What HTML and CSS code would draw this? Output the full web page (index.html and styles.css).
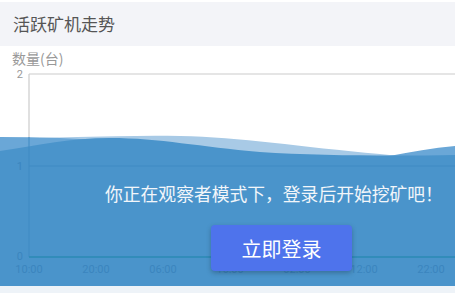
FILE: index.html
```html
<!DOCTYPE html>
<html lang="zh-CN">
<head>
    <meta charset="UTF-8">
    <meta name="viewport" content="width=device-width, initial-scale=1.0">
    <title>活跃矿机走势</title>
    <link rel="stylesheet" href="styles.css">
</head>
<body>
    <div class="panel-header">活跃矿机走势</div>

    <div class="chart-wrap">
        <svg class="chart" width="455" height="247" viewBox="0 46 455 247">
            <!-- axis name -->
            <text class="axis-name" x="12" y="64">数量(台)</text>

            <!-- grid + axis under the mask -->
            <line x1="29" y1="74" x2="455" y2="74" class="grid-top"></line>
            <line x1="29" y1="74" x2="29" y2="257" class="grid-top"></line>
            <text class="y-label" x="23" y="78">2</text>

            <!-- waves -->
            <path class="wave-light" d="M0,139 C60,138 120,135 180,136 C240,137 300,147 380,154 C420,158 440,158 455,157 L455,286 L0,286 Z"></path>
            <path class="wave-mid" d="M0,137 C40,137 80,138 120,142 C200,152 260,170 320,166 C370,162 410,150 455,146 L455,286 L0,286 Z"></path>
            <path class="wave-dark" d="M0,151 C40,145 70,138 110,138 C160,138 200,147 260,152 C320,156 400,156 455,155 L455,286 L0,286 Z"></path>
            <rect class="mask-foot" x="0" y="286" width="455" height="7"></rect>

            <!-- grid seen through the mask -->
            <line x1="29" y1="137" x2="29" y2="257" class="grid-in"></line>
            <line x1="29" y1="166" x2="455" y2="166" class="grid-in"></line>
            <line x1="29" y1="257" x2="455" y2="257" class="axis-x"></line>
            <text class="y-label in" x="23" y="169.5">1</text>
            <text class="y-label in" x="23" y="260">0</text>

            <text class="x-label" x="29" y="272.5">10:00</text>
            <text class="x-label" x="96" y="272.5">20:00</text>
            <text class="x-label" x="163" y="272.5">06:00</text>
            <text class="x-label" x="230" y="272.5">16:00</text>
            <text class="x-label" x="297" y="272.5">02:00</text>
            <text class="x-label" x="364" y="272.5">12:00</text>
            <text class="x-label" x="431" y="272.5">22:00</text>
        </svg>

        <div class="guest-mask">
            <p class="guest-text">你正在观察者模式下，登录后开始挖矿吧！</p>
            <button class="login-button">立即登录</button>
        </div>
    </div>
</body>
</html>
```

FILE: styles.css
```css
body {
    margin: 0;
    width: 455px;
    height: 293px;
    overflow: hidden;
    background-color: #fff;
    font-family: "Noto Sans CJK SC", Roboto, sans-serif;
}
.panel-header {
    margin-top: 2px;
    height: 44px;
    line-height: 44px;
    padding-left: 13px;
    background-color: #f3f4f8;
    color: #555;
    font-size: 17px;
}
.chart-wrap {
    position: relative;
    height: 247px;
    background-color: #fff;
}
.chart {
    display: block;
}
.axis-name {
    font-size: 14px;
    fill: #999;
}
.grid-top {
    stroke: #ccc;
    stroke-width: 1.2;
}
.grid-in {
    stroke: #3f8ac3;
    stroke-width: 1;
}
.axis-x {
    stroke: #2b8ab4;
    stroke-width: 1.5;
}
.y-label {
    font-family: Roboto, sans-serif;
    font-size: 11px;
    fill: #999;
    text-anchor: end;
}
.y-label.in {
    fill: #3b85be;
}
.x-label {
    font-family: Roboto, sans-serif;
    font-size: 11px;
    fill: #3b85be;
    text-anchor: middle;
}
.wave-light {
    fill: #a8cae6;
}
.wave-mid {
    fill: #6aa7d7;
}
.wave-dark {
    fill: #4a94cb;
}
.mask-foot {
    fill: #eef3f8;
}
.guest-mask {
    position: absolute;
    top: 136px;
    left: 0;
    right: 0;
    display: flex;
    flex-direction: column;
    align-items: flex-start;
}
.guest-text {
    margin: 0 0 21px 105px;
    font-size: 17.8px;
    line-height: 22px;
    color: #f2f6fa;
    white-space: nowrap;
}
.login-button {
    margin-left: 211px;
    width: 141px;
    height: 46px;
    border: none;
    border-radius: 4px;
    background-color: #4e73ec;
    color: #fff;
    font-family: "Noto Sans CJK SC", sans-serif;
    font-size: 20px;
    box-shadow: 0 2px 5px rgba(0, 0, 0, 0.25);
    cursor: pointer;
}
```
